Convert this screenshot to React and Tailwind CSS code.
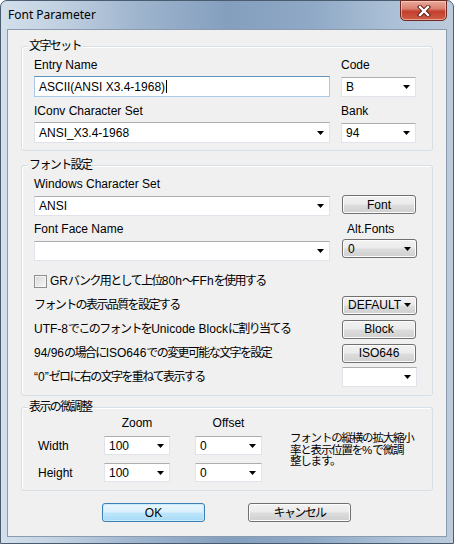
import React from "react";

const Arrow = () => (
  <svg width="7" height="4" viewBox="0 0 7 4" className="shrink-0">
    <path d="M0 0H7L3.5 4Z" fill="#000" />
  </svg>
);

const J = ({ children }) => <span className="tracking-[-1.6px]">{children}</span>;

const TextBox = ({ value, focused, caret, className = "" }) => (
  <div
    className={`h-[21px] flex items-center pl-[4px] bg-white border ${
      focused
        ? "border-[#a9cbe8] border-t-[#5c93bc]"
        : "border-[#e2e3ea] border-t-[#abadb3]"
    } ${className}`}
  >
    <span className="leading-[12px]">{value}</span>
    {caret && <span className="w-px h-[13px] bg-black ml-[1px]" />}
  </div>
);

const Combo = ({ value, className = "" }) => (
  <div
    className={`flex items-center justify-between pl-[4px] pr-[5px] bg-white border border-[#e2e3ea] border-t-[#abadb3] ${className}`}
  >
    <span className="leading-[12px]">{value}</span>
    <Arrow />
  </div>
);

const btnBg =
  "border border-[#707070] rounded-[3px] bg-[linear-gradient(180deg,#f2f2f2_0%,#ebebeb_48%,#dddddd_52%,#cfcfcf_100%)] shadow-[inset_0_0_0_1px_#fcfcfc]";

const Button = ({ children, className = "" }) => (
  <div className={`flex items-center justify-center ${btnBg} ${className}`}>
    <span className="leading-[12px]">{children}</span>
  </div>
);

const DropList = ({ value, className = "" }) => (
  <div className={`flex items-center justify-between pl-[5px] pr-[5px] ${btnBg} ${className}`}>
    <span className="leading-[12px]">{value}</span>
    <Arrow />
  </div>
);

const Group = ({ title, className = "", children }) => (
  <div
    className={`relative border border-[#d5dfe5] rounded-[3px] shadow-[inset_1px_1px_0_#ffffff] ${className}`}
  >
    <span className="absolute left-[6px] top-[-7px] px-[1px] bg-[#f0f0f0] leading-[12px]">
      <J>{title}</J>
    </span>
    {children}
  </div>
);

export default function App() {
  return (
    <div
      className="w-[454px] h-[544px] bg-white text-[12px] text-black"
      style={{ fontFamily: '"Liberation Sans","Noto Sans CJK JP",sans-serif' }}
    >
      <div className="relative w-full h-full rounded-t-[7px] border border-[#4a5c70] flex flex-col bg-[linear-gradient(90deg,#d3dfeb_0%,#c3d2e2_12%,#9fb5ce_30%,#849fbe_50%,#8ea8c5_68%,#a9bed5_85%,#bccbdc_100%)]">
        {/* title bar */}
        <div className="h-[28px] shrink-0 flex items-start pl-[7px] pt-[6px]">
          <span
            className="text-[12px] leading-[16px] text-black"
            style={{ fontFamily: '"Noto Sans","Liberation Sans",sans-serif' }}
          >
            Font Parameter
          </span>
        </div>
        <div className="absolute top-[-1px] right-[6px] w-[47px] h-[21px] rounded-b-[5px] border border-[#6e2a22] bg-[linear-gradient(180deg,#e9a99c_0%,#d9826f_40%,#c1402f_55%,#cf5d44_100%)] shadow-[inset_0_0_0_1px_rgba(255,220,210,0.55)] flex items-center justify-center">
          <svg width="14" height="12" viewBox="0 0 14 12">
            <path d="M3 2L11 10M11 2L3 10" stroke="#5a1a12" strokeWidth="4.2" strokeLinecap="square" />
            <path d="M3 2L11 10M11 2L3 10" stroke="#ffffff" strokeWidth="2.4" strokeLinecap="square" />
          </svg>
        </div>

        {/* client */}
        <div className="flex-1 mx-[6px] mb-[6px] border border-[#8a9bb0] bg-[#f0f0f0] pt-[16px] pl-[13px] pr-[13px] flex flex-col">
          {/* group 1 */}
          <Group title="文字セット" className="pt-[12px] pl-[12px] pb-[7px]">
            <div className="flex gap-[11px]">
              <div className="w-[296px] flex flex-col">
                <span className="leading-[12px] h-[12px]">Entry Name</span>
                <TextBox value="ASCII(ANSI X3.4-1968)" focused caret className="mt-[5px]" />
              </div>
              <div className="w-[75px] flex flex-col">
                <span className="leading-[12px] h-[12px]">Code</span>
                <Combo value="B" className="mt-[6px] h-[20px]" />
              </div>
            </div>
            <div className="flex gap-[11px] mt-[8px]">
              <div className="w-[296px] flex flex-col">
                <span className="leading-[12px] h-[12px]">IConv Character Set</span>
                <Combo value="ANSI_X3.4-1968" className="mt-[5px] h-[21px]" />
              </div>
              <div className="w-[75px] flex flex-col">
                <span className="leading-[12px] h-[12px]">Bank</span>
                <Combo value="94" className="mt-[6px] h-[20px]" />
              </div>
            </div>
          </Group>

          {/* group 2 */}
          <Group title="フォント設定" className="mt-[14px] pt-[12px] pl-[12px] pb-[6px]">
            <div className="flex gap-[12px]">
              <div className="w-[296px] flex flex-col">
                <span className="leading-[12px] h-[12px]">Windows Character Set</span>
                <Combo value="ANSI" className="mt-[6px] h-[20px]" />
              </div>
              <div className="w-[74px] flex flex-col">
                <span className="h-[12px]" />
                <Button className="mt-[5px] h-[19px]">Font</Button>
              </div>
            </div>
            <div className="flex gap-[12px] mt-[7px]">
              <div className="w-[296px] flex flex-col">
                <span className="leading-[12px] h-[12px]">Font Face Name</span>
                <Combo value="" className="mt-[6px] h-[20px]" />
              </div>
              <div className="w-[75px] flex flex-col">
                <span className="leading-[12px] h-[12px] pl-[5px]">Alt.Fonts</span>
                <DropList value="0" className="mt-[4px] h-[19px]" />
              </div>
            </div>
            <div className="mt-[8px] h-[24px] flex items-center gap-[3px]">
              <div className="w-[13px] h-[13px] border border-[#8e8f8f] bg-[linear-gradient(135deg,#d6d6d6,#f9f9f9)] shadow-[inset_0_0_0_1px_#f4f4f4]" />
              <span className="leading-[12px]">
                GR<J>バンク用として上位</J>80h<J>～</J>FFh<J>を使用する</J>
              </span>
            </div>
            <div className="h-[24px] flex items-center">
              <span className="w-[308px] leading-[12px]">
                <J>フォントの表示品質を設定する</J>
              </span>
              <DropList value="DEFAULT" className="w-[75px] h-[19px]" />
            </div>
            <div className="h-[24px] flex items-center">
              <span className="w-[308px] leading-[12px]">
                UTF-8<J>でこのフォントを</J>Unicode Block<J>に割り当てる</J>
              </span>
              <Button className="w-[74px] h-[19px]">Block</Button>
            </div>
            <div className="h-[24px] flex items-center">
              <span className="w-[308px] leading-[12px]">
                94/96<J>の場合に</J>ISO646<J>での変更可能な文字を設定</J>
              </span>
              <Button className="w-[74px] h-[19px]">ISO646</Button>
            </div>
            <div className="h-[24px] flex items-center">
              <span className="w-[308px] leading-[12px]">
                “0”<J>ゼロに右の文字を重ねて表示する</J>
              </span>
              <Combo value="" className="w-[75px] h-[20px]" />
            </div>
          </Group>

          {/* group 3 */}
          <Group title="表示の微調整" className="mt-[11px] pt-[9px] pl-[16px] pb-[8px]">
            <div className="flex">
              <div className="flex flex-col">
                <div className="flex h-[12px]">
                  <span className="w-[66px]" />
                  <span className="w-[66px] text-center leading-[12px]">Zoom</span>
                  <span className="w-[25px]" />
                  <span className="w-[67px] text-center leading-[12px]">Offset</span>
                </div>
                <div className="flex items-center mt-[7px]">
                  <span className="w-[66px] leading-[12px]">Width</span>
                  <Combo value="100" className="w-[66px] h-[19px]" />
                  <span className="w-[25px]" />
                  <Combo value="0" className="w-[67px] h-[19px]" />
                </div>
                <div className="flex items-center mt-[8px]">
                  <span className="w-[66px] leading-[12px]">Height</span>
                  <Combo value="100" className="w-[66px] h-[19px]" />
                  <span className="w-[25px]" />
                  <Combo value="0" className="w-[67px] h-[19px]" />
                </div>
              </div>
              <div className="ml-[28px] mt-[16px] text-[11.5px] leading-[11.5px] whitespace-nowrap">
                <span className="tracking-[-1.2px]">フォントの縦横の拡大縮小</span>
                <br />
                <span className="tracking-[-1.2px]">率と表示位置を</span>%<span className="tracking-[-1.2px]">で微調</span>
                <br />
                <span className="tracking-[-1.2px]">整します。</span>
              </div>
            </div>
          </Group>

          {/* buttons */}
          <div className="mt-[12px] ml-[81px] flex gap-[43px]">
            <div className="w-[103px] h-[19px] flex items-center justify-center border border-[#3c7fb1] rounded-[3px] bg-[linear-gradient(180deg,#eaf6fd_0%,#d9f0fc_48%,#bee6fd_52%,#a7d9f5_100%)] shadow-[inset_0_0_0_1px_#c8ecfe]">
              <span className="leading-[12px]">OK</span>
            </div>
            <Button className="w-[103px] h-[19px]">
              <J>キャンセル</J>
            </Button>
          </div>
        </div>
      </div>
    </div>
  );
}
